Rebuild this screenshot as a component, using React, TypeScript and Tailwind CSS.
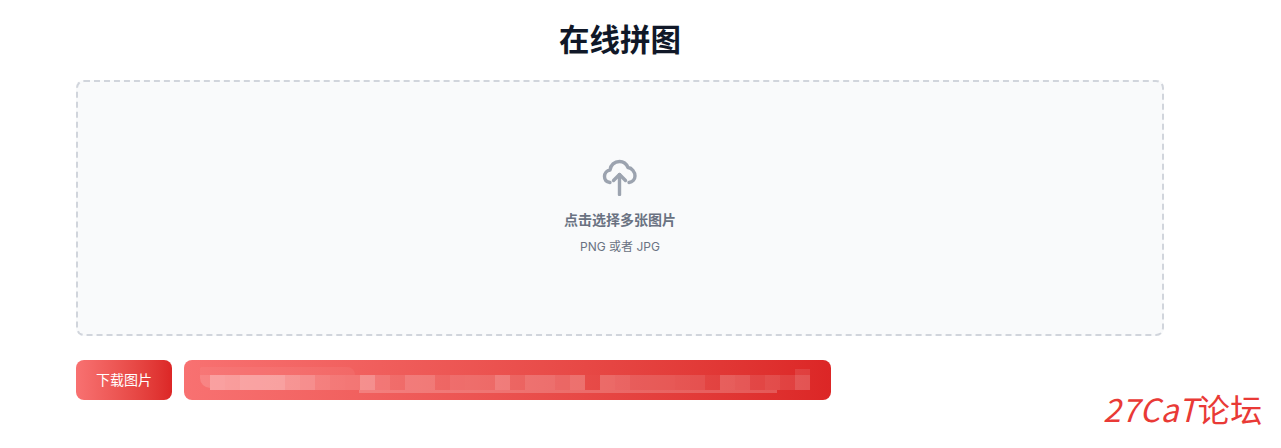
const font = { fontFamily: '"Inter", "Noto Sans CJK SC", sans-serif' };

// mosaic over the redacted text: one alpha per 15px tile
const tiles = [
  0.35, 0.33, 0.38, 0.38, 0.38, 0.3, 0.27, 0.18, 0.15, 0.14, 0.3, 0.16, 0.1, 0.2, 0.2, 0.09,
  0.14, 0.15, 0.14, 0.25, 0.12, 0.2, 0.2, 0.16, 0.22, 0.02, 0.2, 0.18, 0.14, 0.14, 0.14, 0.13,
  0.12, 0.06, 0.2, 0.18, 0.1, 0.14, 0.1, 0.2,
];

function UploadIcon() {
  return (
    <svg width="38" height="38" viewBox="6 6 38 38" fill="none" stroke="#9ca3af" strokeWidth="3.4" strokeLinecap="round" strokeLinejoin="round">
      <path d="M15 30.5C11.5 30 9.5 27.5 9.5 24.5C9.5 21 12 18.5 15 18C15.5 13 19.5 9.5 24.5 9.5C28.5 9.5 31.5 12 33 15.5C37 16 40 20 40 24C40 27.5 37.5 30 34 30.5" />
      <path d="M24.5 42.5V22.5" />
      <path d="M18.5 28.5L24.5 22.5L30.5 28.5" />
    </svg>
  );
}

function DropZone() {
  return (
    <div className="flex h-64 flex-col items-center justify-center rounded-lg border-2 border-dashed border-gray-300 bg-gray-50 pb-1">
      <UploadIcon />
      <p className="mt-[14px] text-sm leading-5 font-semibold text-gray-500">点击选择多张图片</p>
      <p className="mt-[9px] text-xs leading-4 text-gray-500">PNG 或者 JPG</p>
    </div>
  );
}

function RedactedBar() {
  return (
    <div className="flex h-10 w-[647px] flex-col overflow-hidden rounded-lg bg-gradient-to-r from-[#f87171] to-[#dc2626] pt-[7px]">
      <div className="ml-4 flex h-2 w-[610px] items-end justify-between">
        <div className="h-2 w-[155px] rounded-tl-lg rounded-tr-[40px] bg-white/5" />
        <div className="h-[6px] w-[15px] bg-white/10" />
      </div>
      <div className="ml-4 flex h-[15px]">
        <div className="h-[13px] w-[10px] rounded-bl-full bg-white/15" />
        {tiles.map((alpha, i) => (
          <div key={i} className="h-full w-[15px] bg-white" style={{ opacity: alpha }} />
        ))}
      </div>
      <div className="ml-[175px] h-[3px] w-[418px] bg-white/20" />
    </div>
  );
}

export default function App() {
  return (
    <div className="relative h-[448px] w-[1281px] overflow-hidden bg-white" style={font}>
      <div className="ml-[76px] w-[1088px] pt-[22px]">
        <h1 className="text-center text-[30.5px] leading-9 font-bold text-gray-900">在线拼图</h1>
        <div className="mt-[22px]">
          <DropZone />
        </div>
        <div className="mt-6 flex gap-3">
          <button className="h-10 w-24 rounded-lg bg-gradient-to-r from-[#f87171] to-[#dc2626] text-sm text-white">下载图片</button>
          <RedactedBar />
        </div>
      </div>
      <div className="absolute top-[386px] left-[1103px] text-[32px] leading-[44px] tracking-[0.5px] text-[#e93a36]" style={{ fontFamily: '"Noto Sans CJK SC", sans-serif' }}>
        <span className="italic">27CaT</span>论坛
      </div>
    </div>
  );
}
